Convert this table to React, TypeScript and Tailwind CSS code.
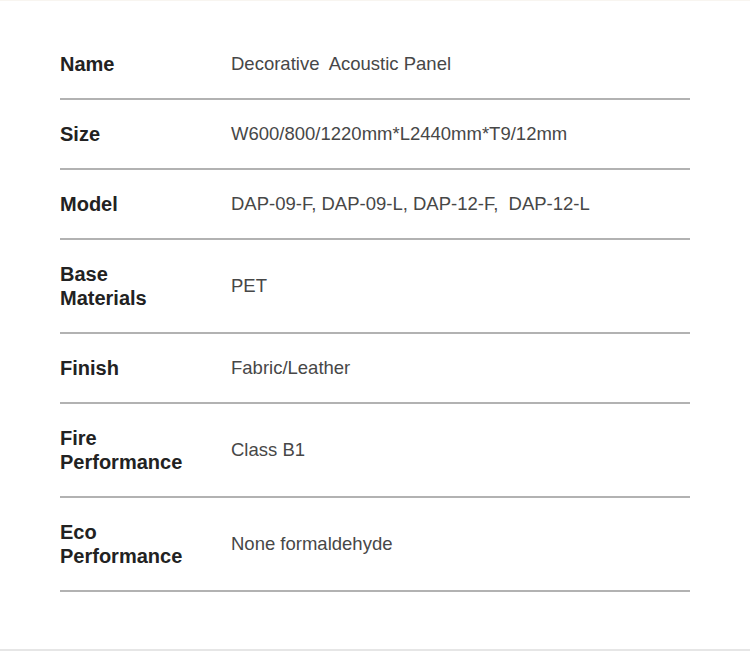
import React from "react";

const rows: { label: string[]; value: string }[] = [
  { label: ["Name"], value: "Decorative\u00a0 Acoustic Panel" },
  { label: ["Size"], value: "W600/800/1220mm*L2440mm*T9/12mm" },
  { label: ["Model"], value: "DAP-09-F, DAP-09-L, DAP-12-F,\u00a0 DAP-12-L" },
  { label: ["Base", "Materials"], value: "PET" },
  { label: ["Finish"], value: "Fabric/Leather" },
  { label: ["Fire", "Performance"], value: "Class B1" },
  { label: ["Eco", "Performance"], value: "None formaldehyde" },
];

export default function App() {
  return (
    <div
      className="w-[750px] h-[651px] bg-white border-t border-t-[#f8f5f0] border-b-2 border-b-[#e6e6e6] box-border flex flex-col"
      style={{ fontFamily: '"Liberation Sans", Arial, sans-serif' }}
    >
      <div className="mt-[29px] mx-[60px] flex flex-col">
        {rows.map((r, i) => (
          <div
            key={i}
            className="grid grid-cols-[171px_1fr] items-center py-[22px] border-b-2 border-[#b2b2b2]"
          >
            <div className="text-[20px] leading-[24px] font-bold text-[#222222]">
              {r.label.map((l, j) => (
                <div key={j}>{l}</div>
              ))}
            </div>
            <div className="text-[18.5px] leading-[24px] text-[#474747]">{r.value}</div>
          </div>
        ))}
      </div>
    </div>
  );
}
